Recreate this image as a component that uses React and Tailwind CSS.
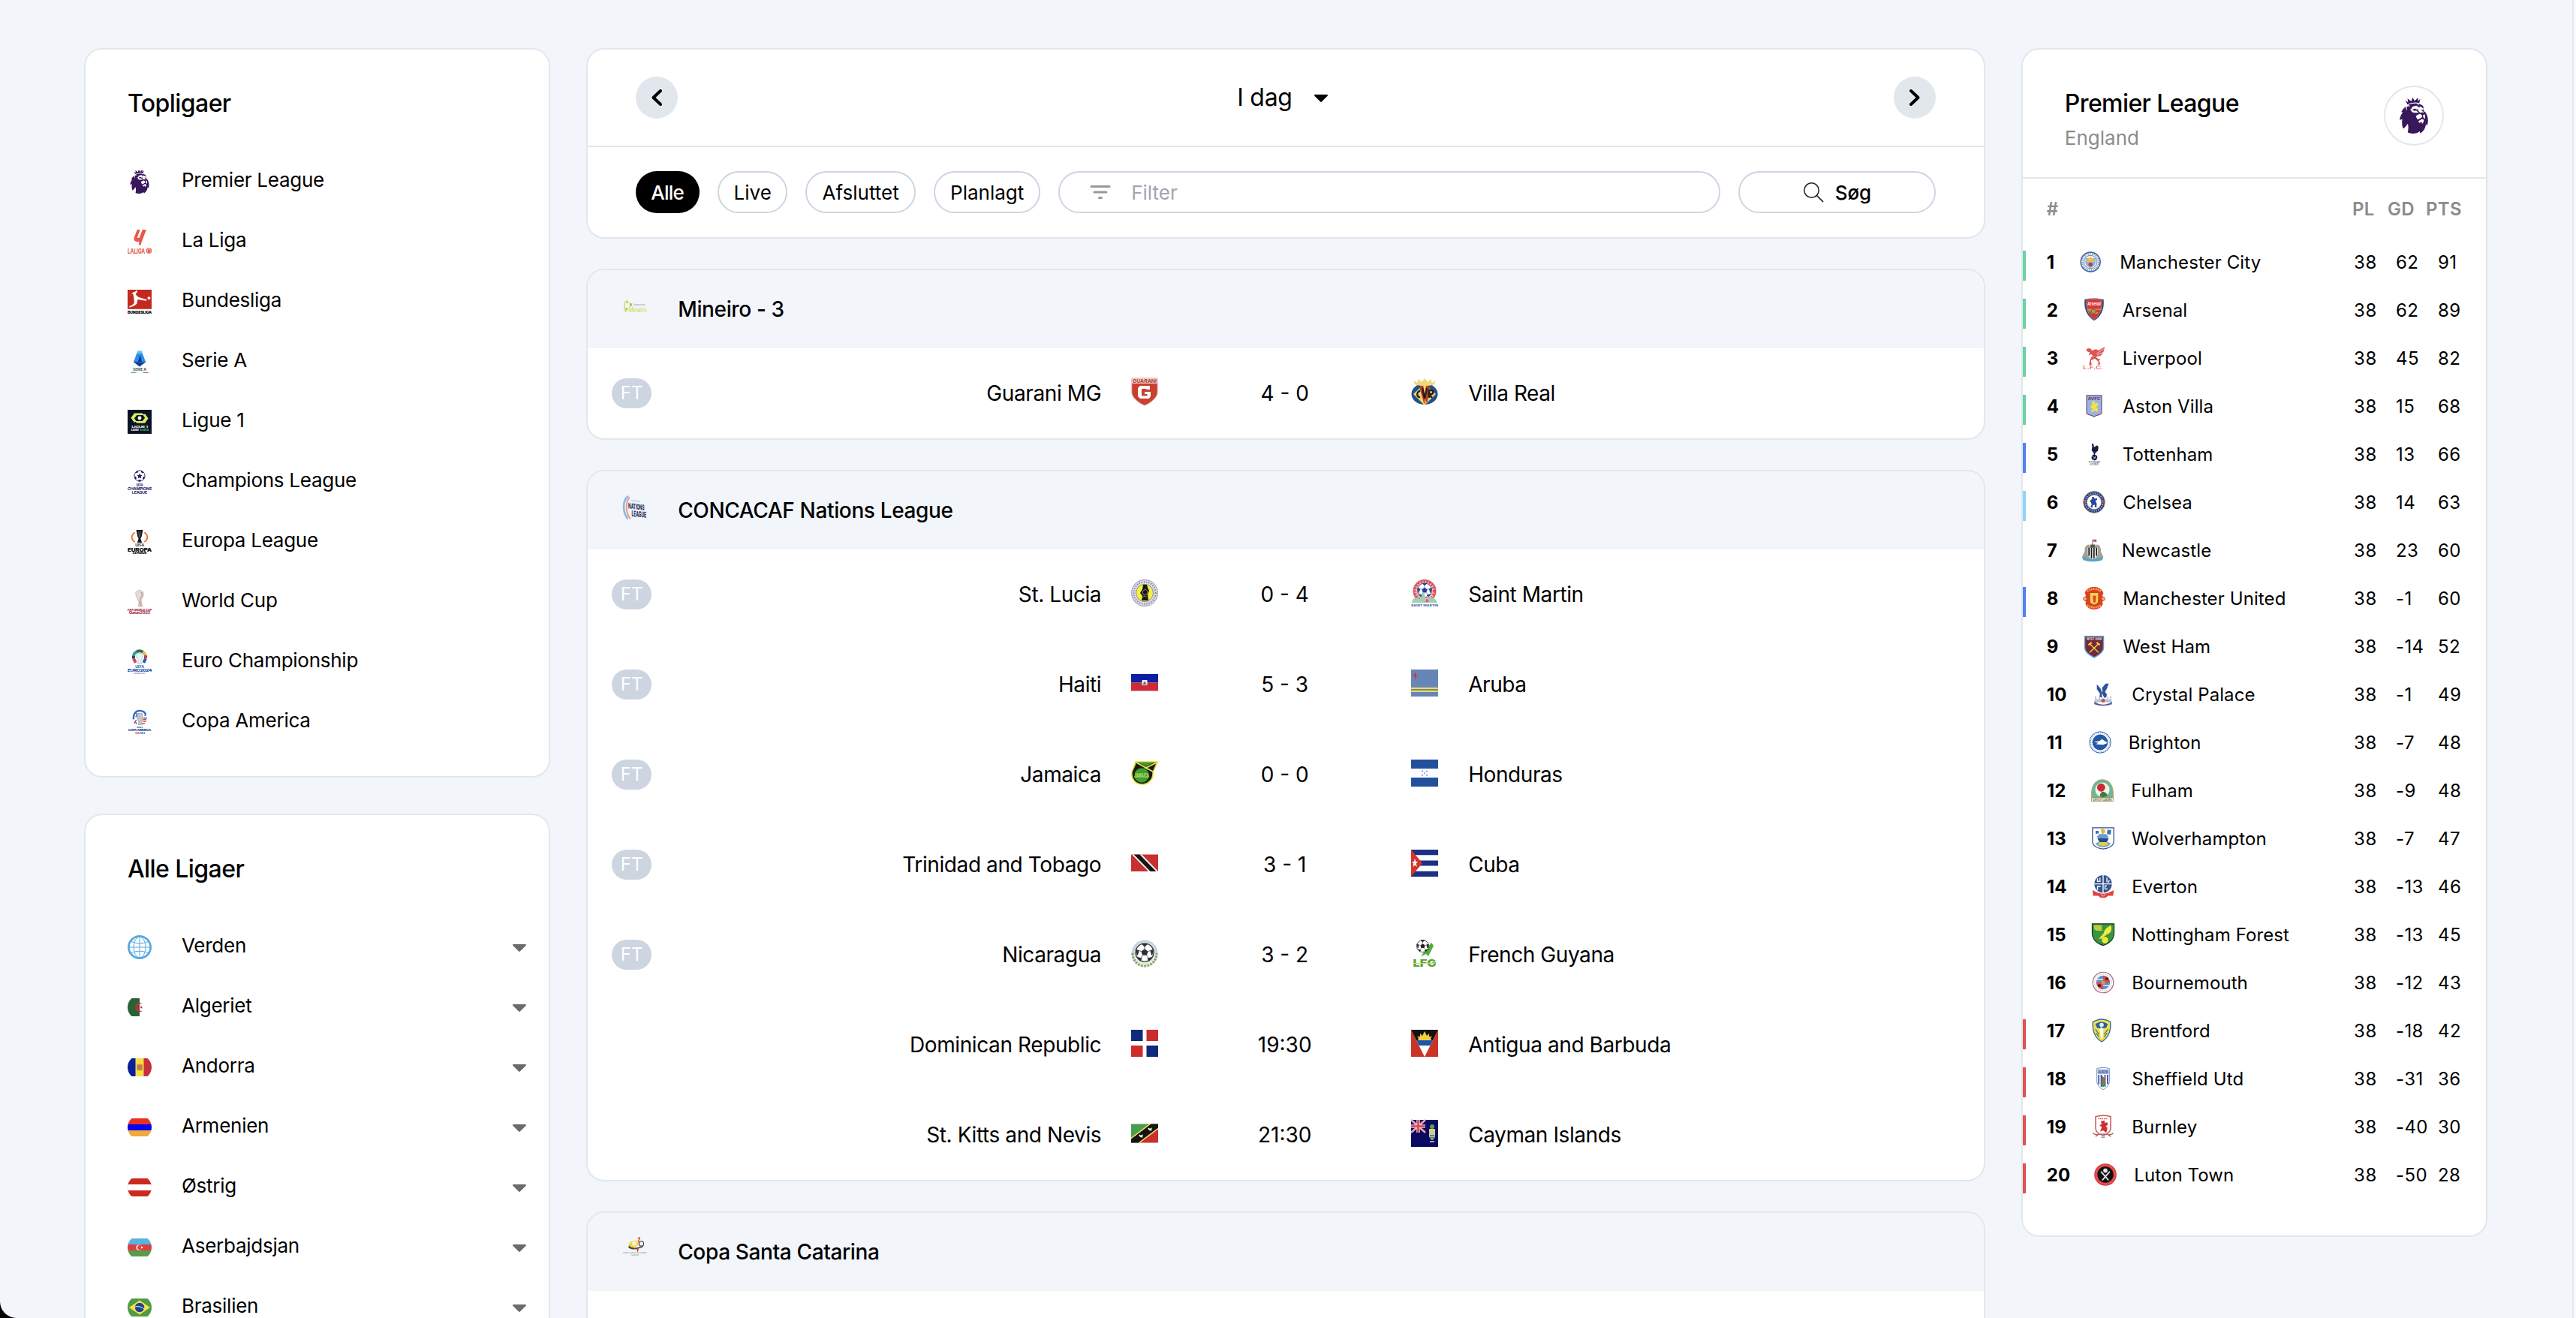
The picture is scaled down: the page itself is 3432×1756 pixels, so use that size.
import React from "react";
import { SiPremierleague } from "react-icons/si";

/* ---------- shared drawing helpers ---------- */

function Box({ size, children }) {
  return (
    <svg viewBox="0 0 36 36" width={size} height={size} className="block shrink-0 overflow-visible" preserveAspectRatio="none">
      {children}
    </svg>
  );
}

function Label({ x = 18, y, size, fill, children, weight = 700, width }) {
  return (
    <text x={x} y={y} fontSize={size} fontWeight={weight} fill={fill} textAnchor="middle" fontFamily="Inter, sans-serif" textLength={width} lengthAdjust="spacingAndGlyphs">
      {children}
    </text>
  );
}

function Ball({ cx, cy, r, dark = "#111", light = "#fff" }) {
  return (
    <g transform={`translate(${cx} ${cy}) scale(${r / 10})`}>
      <circle r="10" fill={light} stroke={dark} strokeWidth="1" />
      <path d="M0-4 3.8-1.2 2.4 3.2-2.4 3.2-3.8-1.2Z" fill={dark} />
      <path d="M-3-9.6H3L0-7ZM9.6-3 8 3 6.8-2ZM-9.6-3-8 3-6.8-2ZM3.5 7 8 5.5 5 9ZM-3.5 7-8 5.5-5 9Z" fill={dark} stroke={dark} />
      <path d="M0-4V-8M3.8-1.2 7.6-2.4M2.4 3.2 4.6 7M-2.4 3.2-4.6 7M-3.8-1.2-7.6-2.4" stroke={dark} strokeWidth="0.6" />
    </g>
  );
}

const lionPurple = "#38175a";

/* ---------- top league logos ---------- */

const leagueLogos = {
  premier: <SiPremierleague size={32} color={lionPurple} className="block shrink-0" />,
  laliga: (
    <Box size={32}>
      <path d="M14.500 0h4.500l-4.500 12h3l4.500-12h6l-7.500 20-1 3.500-3-1 1-4.500h-3c-4 0-6-3-4.500-7Z" fill="#e9594c" />
      <path d="M19 0h3l-4.500 12h-3Z" fill="#fff" />
      <Label x={13} y={35.500} size={10.500} fill="#e9594c" width={26}>LALIGA</Label>
      <circle cx="32" cy="31.500" r="4.200" fill="#e9594c" />
      <path d="M30 34v-3.500a2 2 0 0 1 4 0v3.500" stroke="#fff" fill="none" strokeWidth="0.800" />
    </Box>
  ),
  bundesliga: (
    <Box size={32}>
      <rect width="36" height="29" fill="#c3291f" />
      <path d="M3 9c2-3 5-6 8-6l2-2c2 0 2 3 0 4l-1 2 4 4 13 4-1 1.500-13-2 -1 6c-2 3-7 5-12 6l1-2c4-1 7-4 7-6l-1-8-1-5c-2 0-4 2-5 4Z" fill="#fff" />
      <circle cx="32" cy="12.500" r="2.200" fill="#fff" />
      <Label y={36} size={5.600} fill="#111" width={36} weight={900}>BUNDESLIGA</Label>
    </Box>
  ),
  seriea: (
    <Box size={32}>
      <path d="M15 2h6l6 16-9 7-9-7Z" fill="#2c8ee8" />
      <path d="M15 2h6l1 4h-8Z" fill="#54c6f2" />
      <path d="M19 8l2 10-6 1M9 18l9 7 9-7-9 2Z" fill="#123a8c" stroke="#123a8c" strokeWidth="0.500" />
      <Label y={32} size={5} fill="#4a5568" width={20}>SERIE A</Label>
      <path d="M5 34.300h8" stroke="#3f9c5c" strokeWidth="1" />
      <path d="M23 34.300h8" stroke="#c4434c" strokeWidth="1" />
    </Box>
  ),
  ligue1: (
    <Box size={32}>
      <rect width="36" height="36" fill="#0b1227" />
      <path d="M10 5h12l3 3h-11l-4 5 3 4-3 2-5-7ZM26 20H14l-3-3h11l4-5-3-4 3-2 5 7Z" fill="#d3ef5a" />
      <circle cx="18" cy="12.500" r="2.800" fill="#fff" />
      <Label y={27} size={4.500} fill="#fff" width={24}>LIGUE 1</Label>
      <Label x={11} y={32} size={4.500} fill="#fff" width={12}>Uber</Label>
      <Label x={25} y={32} size={4.500} fill="#3aa45f" width={13}>Eats</Label>
    </Box>
  ),
  champions: (
    <Box size={32}>
      <g transform="translate(18 9)">
        <circle r="8" fill="#fff" stroke="#1c1b5e" strokeWidth="1" />
        <path d="M0-4 1.200-1.200 4-1 1.800 1 2.600 4 0 2.400-2.600 4-1.800 1-4-1-1.200-1.200ZM-6-5l3-2.500 1 1.500-2 2ZM6-5 3-7.500 2-6l2 2ZM-8 1l2.500 0 1 3-2 1ZM8 1 5.500 1l-1 3 2 1ZM-2 6h4l-.500 2.500h-3Z" fill="#1c1b5e" />
      </g>
      <Label y={24.500} size={5} fill="#1c1b5e" width={10}>UEFA</Label>
      <Label y={30.800} size={5.800} fill="#1c1b5e" width={36}>CHAMPIONS</Label>
      <Label y={36} size={5.800} fill="#1c1b5e" width={23}>LEAGUE</Label>
    </Box>
  ),
  europa: (
    <Box size={32}>
      <path d="M11 4C5 7 5 15 11 18M25 4c6 3 6 11 0 14" fill="none" stroke="#ee6d2d" strokeWidth="2" />
      <path d="M13 0h10l-2 10-1.500 3 2 6h-7l2-6L15 10Z" fill="#151515" />
      <path d="M16.500 2l1 9M19.500 2l-1 9" stroke="#aaa" strokeWidth="0.600" />
      <Label y={25} size={5} fill="#333" width={13}>UEFA</Label>
      <Label y={32.300} size={7} fill="#111" width={36} weight={900}>EUROPA</Label>
      <Label y={36} size={4.300} fill="#111" width={21} weight={900}>LEAGUE</Label>
    </Box>
  ),
  worldcup: (
    <Box size={32}>
      <path d="M12 5c0-6 12-6 12 1 0 5-4 8-4 12l2 7h-6l1-6c-1-4-5-9-5-14Z" fill="#e3ddd8" stroke="#b9aca4" strokeWidth="0.700" />
      <path d="M20 3c3 2 2 7-1 10l-1 9" fill="none" stroke="#a59a92" strokeWidth="1.300" />
      <path d="M17 17l4 0 1 7h-4Z" fill="#e0a9b4" />
      <Label y={31.500} size={4.600} fill="#a53148" width={36} weight={800}>FIFA WORLD CUP</Label>
      <Label y={35.800} size={5} fill="#a53148" width={32} weight={800}>Qatar2022</Label>
    </Box>
  ),
  euro: (
    <Box size={32}>
      <g fill="none" strokeWidth="4.500">
        <path d="M13 3c3-2 7-2 10 0" stroke="#3a6b49" />
        <path d="M23 3c2 1 3 3 4 5" stroke="#e4bc3b" />
        <path d="M27 8v5" stroke="#c43b42" />
        <path d="M27 13l-3 6" stroke="#2d5ca8" />
        <path d="M13 3c-2 1-4 3-4 6" stroke="#2fa3a0" />
        <path d="M9 9v4" stroke="#27467f" />
        <path d="M9 13l3 6" stroke="#d24a3c" />
      </g>
      <path d="M14 5h8l1 6-3 5 1 5h-6l1-5-3-5Z" fill="#e7f1f3" stroke="#98c7cf" strokeWidth="0.800" />
      <Label y={26.500} size={5} fill="#3b68b0" width={13}>UEFA</Label>
      <Label y={32.500} size={5.600} fill="#23529f" width={36} weight={800}>EURO2024</Label>
      <Label y={36} size={3} fill="#7d9ccb" width={18}>GERMANY</Label>
    </Box>
  ),
  copa: (
    <Box size={32}>
      <path d="M9 14C8 5 13 1 18 1c5 0 9 3 9 6" fill="none" stroke="#2d66c3" strokeWidth="2.600" />
      <path d="M12 5l3 2-3 3M10 20l3-5M25 8h3M24 12h5" stroke="#2d66c3" strokeWidth="1.600" fill="none" />
      <path d="M23 14h5M23 17h5M11 17l3 4M22 20h4" stroke="#d5404a" strokeWidth="1.700" />
      <path d="M15 5h7l1 7-2 6 1 4h-6l1-4-3-6Z" fill="#c4c6ca" stroke="#8f9297" strokeWidth="0.700" />
      <Label y={27} size={3} fill="#2b4a9a" width={9}>2024</Label>
      <Label y={32} size={4.300} fill="#1f3b8d" width={34} weight={800}>COPA AMERICA</Label>
      <Label x={14.500} y={36} size={3.400} fill="#d5404a" width={6}>USA</Label>
      <Label x={22} y={36} size={3.400} fill="#2d66c3" width={8}>2024</Label>
    </Box>
  ),
};

/* ---------- country flags, clipped by a circle ---------- */

function RoundFlag({ id, children }) {
  return (
    <svg viewBox="0 0 32 32" width="32" height="32" className="block shrink-0">
      <clipPath id={`flag-${id}`}>
        <circle cx="16" cy="16" r="16" />
      </clipPath>
      <g clipPath={`url(#flag-${id})`}>
        <g transform="translate(0 4)">{children}</g>
      </g>
    </svg>
  );
}

const countryFlags = {
  world: (
    <svg viewBox="0 0 32 32" width="32" height="32" className="block shrink-0" fill="none" stroke="#57a9de">
      <circle cx="16" cy="16" r="14.600" strokeWidth="2.800" />
      <path d="M16 2v28M2 16h28M5 8.500c6 3 16 3 22 0M5 23.500c6-3 16-3 22 0" strokeWidth="1" />
      <ellipse cx="16" cy="16" rx="8" ry="14" strokeWidth="1" />
    </svg>
  ),
  dz: (
    <RoundFlag id="dz">
      <rect width="16" height="24" fill="#2a6238" />
      <rect x="16" width="16" height="24" fill="#fff" />
      <path d="M20 7.500a6 6 0 1 0 0 9 4.800 4.800 0 1 1 0-9Z" fill="#c32b41" />
      <path d="M20.500 12l-4-1.300 2.500 3.300v-4l-2.500 3.300Z" fill="#c32b41" />
    </RoundFlag>
  ),
  ad: (
    <RoundFlag id="ad">
      <rect width="11" height="24" fill="#0a1f9c" />
      <rect x="10.500" width="11.500" height="24" fill="#f7dc45" />
      <rect x="21.500" width="11" height="24" fill="#c6313e" />
      <rect x="12" y="7.500" width="8" height="9" rx="2" fill="#c9a04a" />
      <path d="M14 9v6M16 9v6M18 9v6" stroke="#b5543b" strokeWidth="0.900" />
    </RoundFlag>
  ),
  am: (
    <RoundFlag id="am">
      <rect width="32" height="8" fill="#e8311f" />
      <rect y="8" width="32" height="8" fill="#0503f0" />
      <rect y="16" width="32" height="8" fill="#f0a93c" />
    </RoundFlag>
  ),
  at: (
    <RoundFlag id="at">
      <rect width="32" height="24" fill="#cc2a1f" />
      <rect y="8" width="32" height="8" fill="#fff" />
    </RoundFlag>
  ),
  az: (
    <RoundFlag id="az">
      <rect width="32" height="8" fill="#55b5df" />
      <rect y="8" width="32" height="8" fill="#dc3f42" />
      <rect y="16" width="32" height="8" fill="#5a9c48" />
      <circle cx="15" cy="12" r="3.600" fill="#fff" />
      <circle cx="16" cy="12" r="2.900" fill="#dc3f42" />
      <circle cx="19" cy="12" r="1.300" fill="#fff" />
    </RoundFlag>
  ),
  br: (
    <RoundFlag id="br">
      <rect width="32" height="24" fill="#4f9c45" />
      <path d="M16 2.500 30 12 16 21.500 2 12Z" fill="#f8df49" />
      <circle cx="16" cy="12" r="6.200" fill="#20418f" />
      <path d="M10 11c4-1 9 0 12 3" stroke="#fff" strokeWidth="1" fill="none" />
    </RoundFlag>
  ),
};

/* ---------- badges used in the match list ---------- */

const matchBadges = {
  mineiro: (
    <Box size={32}>
      <path d="M6 9c-5 4-5 13-1 18" fill="none" stroke="#b9d84c" strokeWidth="1.300" />
      <path d="M6 10l2.500 1.500-1 2.500-2.500-1ZM10 13l3.500 1v3.500l-3.500 1ZM4 20l3.500 1-1 3.500-2.500-1Z" fill="#a5cf3a" />
      <Label x={24} y={17} size={3.600} fill="#9aa0a5" width={19} weight={500}>Campeonato</Label>
      <Label x={22} y={27} size={9.500} fill="#c6db4f" width={27} weight={400}>Mineiro</Label>
    </Box>
  ),
  nations: (
    <Box size={32}>
      <path d="M8 1C-1 8-1 24 7 35" fill="none" stroke="#8fb8e0" strokeWidth="3" />
      <path d="M10 3C4 10 3 25 11 35" fill="none" stroke="#ea9c9c" strokeWidth="2.400" />
      <g transform="skewY(6)">
        <Label x={19} y={8} size={4} fill="#b9c6dc" width={14}>CONCACAF</Label>
        <Label x={20} y={19} size={11.500} fill="#2a2f5c" width={24} weight={800}>NATIONS</Label>
        <Label x={24} y={30} size={12} fill="#2a2f5c" width={22} weight={800}>LEAGUE</Label>
      </g>
    </Box>
  ),
  catarina: (
    <Box size={32}>
      <ellipse cx="16" cy="10.500" rx="8" ry="5" fill="#f5d640" transform="rotate(-20 16 10)" />
      <path d="M9 13c4 5 14 4 22-1l-1 3c-7 4-17 5-22 1Z" fill="#4d4842" />
      <circle cx="27.500" cy="10" r="3.500" fill="#f4f4f4" stroke="#333" strokeWidth="1.200" />
      <circle cx="17" cy="9.500" r="3.500" fill="#f7f0d0" />
      <path d="M22 2l3-1-2 6M21 17l1 4 1-3" stroke="#cf3a3a" strokeWidth="1.400" fill="none" />
      <Label y={25} size={3} fill="#8c8c8c" width={36} weight={500}>COPA SANTA CATARINA</Label>
      <Label y={28.500} size={3} fill="#8c8c8c" width={11} weight={500}>SUB 20</Label>
    </Box>
  ),
  guarani: (
    <Box size={36}>
      <path d="M1 0h34v19c0 6-9 14-17 17C10 33 1 25 1 19Z" fill="#c8402f" stroke="#d98d84" strokeWidth="1" />
      <rect x="1" y="0" width="34" height="7" fill="#f0cfca" />
      <Label y={6} size={6.500} fill="#b13a2d" width={32}>GUARANI</Label>
      <path d="M25 15v-5H12l-3 3v11l3 3h12l2-3v-6h-8v3h3.500v2.500H14V14h6.500v1Z" fill="#fff" />
    </Box>
  ),
  villareal: (
    <Box size={36}>
      <ellipse cx="18" cy="21" rx="17.500" ry="14" fill="#245088" />
      <path d="M18 7 33 21 18 36 3 21Z" fill="#f0d76b" />
      <path d="M11 12l5-4 4 26-3-1ZM25 12l-5-4-2 26 4-3Z" fill="#c4392e" />
      <path d="M5 8 3 3l5 3 2-5 4 4 4-5 4 5 4-4 2 5 5-3-2 5c-8 3-18 3-26 0Z" fill="#efd877" />
      <path d="M12 17c-5 0-5 9 0 8M15 13l3 14 3-14M24 26V16h3c3 0 3 5 0 5h-3l4 5" fill="none" stroke="#231f20" strokeWidth="2.400" />
    </Box>
  ),
  stlucia: (
    <Box size={36}>
      <circle cx="18" cy="18" r="17.400" fill="#dcdce8" stroke="#a7a7bd" strokeWidth="1.200" />
      <circle cx="18" cy="18" r="14.600" fill="none" stroke="#7a7a9f" strokeWidth="2.200" strokeDasharray="1.200 2" />
      <circle cx="18" cy="18" r="11.500" fill="#f3ee4c" stroke="#77774d" strokeWidth="0.800" />
      <path d="M16 7h5l1 4 2 4-2 5 1 8h-9l1-6-3-4 3-5Z" fill="#161616" />
      <path d="M16 15l3-2 3 3-1 4-4 1-2-3ZM15 24l3-2 3 2" fill="none" stroke="#a9a950" strokeWidth="0.800" />
    </Box>
  ),
  stmartin: (
    <Box size={36}>
      <circle cx="18" cy="15.500" r="14.500" fill="#f0b9bb" stroke="#dc5a5e" strokeWidth="2" />
      <circle cx="18" cy="15.500" r="12.500" fill="none" stroke="#d8464c" strokeWidth="2.600" strokeDasharray="2 1.800" />
      <Ball cx={18} cy={14.500} r={9.500} dark="#2a3d92" />
      <path d="M1 31c0-5 5-8 8-6l4 1 2-9 3 1 1 12h4l2-7c4 0 9 4 10 8Z" fill="#9fd0b4" />
      <Label y={36} size={4} fill="#3b5aa0" width={36}>SAINT MARTIN</Label>
    </Box>
  ),
  haiti: (
    <Box size={36}>
      <rect y="6" width="36" height="11.500" fill="#0c1fa4" />
      <rect y="17.500" width="36" height="11" fill="#cb2b38" />
      <rect x="14.500" y="14" width="7" height="7" fill="#e9e9e9" />
      <path d="M15.500 20h5l-2.500-4.500Z" fill="#5c6b52" />
    </Box>
  ),
  aruba: (
    <Box size={36}>
      <rect width="36" height="36" fill="#6786b7" />
      <rect y="24" width="36" height="2" fill="#efe04b" />
      <rect y="28" width="36" height="2" fill="#efe04b" />
      <path d="M5.500 3l1 4 3 1-3 1-1 5-1-5-3-1 3-1Z" fill="#d2313c" />
    </Box>
  ),
  jamaica: (
    <Box size={36}>
      <path d="M6 3h29l-6 14c1 9-6 16-14 16C5 33 0 25 1 17 2 12 5 10 6 3Z" fill="#161b12" stroke="#e6df36" strokeWidth="1.600" />
      <path d="M9 4h22L20 9ZM12 13l8-4 5 5" fill="#3d9a36" />
      <path d="M7 4 29 16M34 4 16 13" stroke="#e9e34a" strokeWidth="1.800" />
      <circle cx="14" cy="21" r="10" fill="#3f9e39" stroke="#183d16" strokeWidth="1" />
      <Label x={14} y={24} size={7} fill="#c5df4a" width={20}>JAMAICA</Label>
    </Box>
  ),
  honduras: (
    <Box size={36}>
      <rect width="36" height="36" fill="#22509c" />
      <rect y="12" width="36" height="12" fill="#fbfcfe" />
      <g fill="#7ea2d6">
        <circle cx="15" cy="15.500" r="1.100" />
        <circle cx="21" cy="15.500" r="1.100" />
        <circle cx="18" cy="18" r="1.100" />
        <circle cx="15" cy="20.800" r="1.100" />
        <circle cx="21" cy="20.800" r="1.100" />
      </g>
    </Box>
  ),
  trinidad: (
    <Box size={36}>
      <rect y="6.500" width="36" height="22.500" fill="#c8302f" />
      <path d="M1 6.500h13L36 29H23Z" fill="#fff" />
      <path d="M3.500 6.500h8L33.500 29h-8Z" fill="#161616" />
    </Box>
  ),
  cuba: (
    <Box size={36}>
      <rect width="36" height="36" fill="#fff" />
      <path d="M0 3.600h36M0 18h36M0 32.400h36" stroke="#1b3283" strokeWidth="7.200" />
      <path d="M0 0 15 18 0 36Z" fill="#d3342b" />
      <path d="M5 12l1.200 4H9l-2.300 2.500 1 4.500L5 20.500 2.300 23l1-4.500L1 16h2.800Z" fill="#fff" />
    </Box>
  ),
  nicaragua: (
    <Box size={36}>
      <circle cx="18" cy="18" r="17.500" fill="#bcd6e8" />
      <path d="M2 18c0 10 7 17 16 17s16-7 16-17" fill="#e9edd8" stroke="#86a36c" strokeWidth="3.200" strokeDasharray="2.600 1.600" />
      <circle cx="18" cy="16.500" r="14" fill="#ddd8c4" />
      <Ball cx={18} cy={17} r={12} dark="#2a2e38" />
    </Box>
  ),
  guyana: (
    <Box size={36}>
      <path d="M19 14l8-10 3 4-7 14-3-3-7 3Z" fill="#4cae36" />
      <Ball cx={15.500} cy={8.500} r={8} dark="#222" />
      <Label y={36} size={13} fill="#5aa544" width={31} weight={900}>LFG</Label>
      <path d="M4 31.500h28" stroke="#d8e04c" strokeWidth="1" />
    </Box>
  ),
  dominican: (
    <Box size={36}>
      <rect width="36" height="36" fill="#fff" />
      <rect width="15.500" height="15" fill="#10297c" />
      <rect x="20.500" width="15.500" height="15" fill="#cc2d2b" />
      <rect y="21" width="15.500" height="15" fill="#cc2d2b" />
      <rect x="20.500" y="21" width="15.500" height="15" fill="#10297c" />
    </Box>
  ),
  antigua: (
    <Box size={36}>
      <rect width="36" height="36" fill="#cb3327" />
      <path d="M0 0h36L18 36Z" fill="#fff" />
      <path d="M0 0h36L29 14H7Z" fill="#121212" />
      <path d="M7 14h22l-3.500 7h-15Z" fill="#1f55a8" />
      <path d="M9 14l1-3-2-2 4 0 0-4 3 3 3-6 3 6 3-3 0 4 4 0-2 2 1 3Z" fill="#f3cf3e" />
    </Box>
  ),
  stkitts: (
    <Box size={36}>
      <path d="M0 5.500h36L0 30.500Z" fill="#4a9c50" />
      <path d="M36 5.500v25H0Z" fill="#c9302f" />
      <path d="M24 5.500h12v7L12 30.500H0v-7Z" fill="#efe04b" />
      <path d="M26.500 5.500H36v5L9.500 30.500H0v-5Z" fill="#141414" />
      <path d="M11 20l1.500 2 2-1-.500 2.500M23 11l1.500 2 2-1-.500 2.500" stroke="#fff" strokeWidth="1.800" fill="none" />
    </Box>
  ),
  cayman: (
    <Box size={36}>
      <rect width="36" height="36" fill="#0a0a62" />
      <path d="M0 0 19 17M19 0 0 17" stroke="#e9a9b0" strokeWidth="2.600" />
      <path d="M9.500 0v17M0 8.500h19" stroke="#f3c9cd" strokeWidth="4.600" />
      <path d="M9.500 0v17M0 8.500h19" stroke="#d4474f" strokeWidth="2.600" />
      <path d="M24 12h8v9c0 3-2 5-4 6-2-1-4-3-4-6Z" fill="#d8c98a" />
      <path d="M25 21h6M25 24h6" stroke="#3e86b8" strokeWidth="1.800" />
      <circle cx="28" cy="9" r="3" fill="#57a05a" />
      <path d="M25 29h6" stroke="#e6cf6a" strokeWidth="1.600" />
    </Box>
  ),
};

/* ---------- club badges in the standings ---------- */

const clubBadges = {
  city: (
    <Box size={30}>
      <circle cx="17" cy="18" r="15.500" fill="#fff" stroke="#44699a" strokeWidth="2" />
      <circle cx="17" cy="18" r="13" fill="none" stroke="#7f98bd" strokeWidth="2.600" strokeDasharray="1.600 1.400" />
      <circle cx="17" cy="18" r="10.500" fill="#eef3f8" stroke="#44699a" strokeWidth="1" />
      <path d="M9 12h16v7c0 4-4 7-8 9-4-2-8-5-8-9Z" fill="#86b4df" />
      <path d="M11 18v-4l3-2 3-2 3 2 3 2v4Z" fill="#edc04b" />
      <circle cx="17" cy="22" r="3.200" fill="#c03a4a" />
    </Box>
  ),
  arsenal: (
    <Box size={30}>
      <path d="M3 1c10-2 20-2 30 0 2 15-4 28-15 34C7 29 1 16 3 1Z" fill="#2d4a7e" />
      <path d="M6 2c8-2 16-2 24 0 1 14-3 25-12 31C9 27 5 16 6 2Z" fill="#d9343b" stroke="#c9a35c" strokeWidth="0.800" />
      <Label y={11} size={7} fill="#fff" width={21}>Arsenal</Label>
      <path d="M7 16h20l3-1v3h-8l-2 3h4v3H13v-3l-6-2Z" fill="#b89554" />
      <circle cx="17" cy="20" r="3.500" fill="none" stroke="#8a6f42" strokeWidth="1.500" />
    </Box>
  ),
  liverpool: (
    <Box size={30}>
      <path d="M5 5c3-4 9-3 9 1l7-2 4 2 10-6-2 8-4 6-8 2c2 3 4 4 7 3l-2 3 2 6-4 1 1-5-6-5-6 3 1 7-4 0 1-6 2-6 3-3-4-2-3 2 2-5-3-1Z" fill="#dd5653" />
      <path d="M22 11 34 3M23 13l10-4M13 12l4 4" stroke="#fff" strokeWidth="0.800" />
      <Label x={16.500} y={36} size={7.500} fill="#dd5653" width={33} weight={500}>L.F.C.</Label>
    </Box>
  ),
  villa: (
    <Box size={30}>
      <path d="M6 1h24v28c0 3-8 3-12 6-4-3-12-3-12-6Z" fill="#98b5e0" stroke="#7d4a74" strokeWidth="1.400" />
      <Label y={8} size={6.500} fill="#6d2f5d" width={20}>AVFC</Label>
      <path d="M14 11l6-1-1 4 5-1 1 4-4 2 3 3-1 6-4-3-4 3-2-2 3-4-3 0-1-4 3-2Z" fill="#f0e04e" />
    </Box>
  ),
  tottenham: (
    <Box size={30}>
      <path d="M14 1l3 1 1 5 5-3 2 3-1 6-4 3-1 4h-1l-1-4-3-4 1-6Z" fill="#171b41" />
      <circle cx="18.500" cy="23.500" r="4.600" fill="#171b41" />
      <path d="M15 22l7 3M17 27l4-7" stroke="#fff" strokeWidth="0.700" />
      <Label y={32} size={4.400} fill="#6e7190" width={18}>TOTTENHAM</Label>
      <Label y={36} size={4.400} fill="#6e7190" width={13}>HOTSPUR</Label>
    </Box>
  ),
  chelsea: (
    <Box size={30}>
      <circle cx="18" cy="18" r="17.300" fill="#253c8c" stroke="#b59f5c" strokeWidth="1.200" />
      <circle cx="18" cy="18" r="14" fill="none" stroke="#a6b1d6" strokeWidth="2.600" strokeDasharray="1.500 2" />
      <circle cx="18" cy="18" r="11.500" fill="#fff" stroke="#b59f5c" strokeWidth="0.800" />
      <path d="M14 10l4 0 1 3 3-2 1 3-3 2 2 4 0 6-3 0 0-4-3 1-1 4-3-1 2-4-1-4-2-1 2-3 2-1Z" fill="#2b46a0" />
      <circle cx="3.500" cy="18" r="2" fill="#c8434e" />
      <circle cx="32.500" cy="18" r="2" fill="#c8434e" />
    </Box>
  ),
  newcastle: (
    <Box size={30}>
      <path d="M1 32c-2-8 4-8 3-14 0-5 3-9 7-9l2 4h8l2-4c4 0 7 4 7 9-1 6 5 6 3 14Z" fill="#a3a095" />
      <path d="M9 14h16v9c0 5-4 8-8 9-4-1-8-4-8-9Z" fill="#f2f2f0" />
      <path d="M11 14v13M15 14v17M19 14v17M23 14v13" stroke="#151515" strokeWidth="2" />
      <path d="M13 9h8v5h-8ZM16 2h1v7h-1Z" fill="#5f564b" />
      <path d="M17 1h6v4l-6-1Z" fill="#cc5563" />
      <path d="M0 28c10 6 24 6 34 0l-2 6c-9 3-21 3-30 0Z" fill="#4fa5c9" />
    </Box>
  ),
  united: (
    <Box size={30}>
      <path d="M3 10C5 3 11 0 18 0s13 3 15 10l-2 4 4 5-4 5 1 3c-2 6-8 9-14 9S6 33 4 27l1-3-4-5 4-5Z" fill="#dc4029" />
      <path d="M7 7c6-5 16-5 22 0M7 29c6 5 16 5 22 0" fill="none" stroke="#f3c24c" strokeWidth="3" strokeDasharray="2 1.500" />
      <path d="M11 9h14v13c0 4-4 6-7 7-3-1-7-3-7-7Z" fill="#f5d14f" stroke="#b93622" strokeWidth="1" />
      <path d="M16 14h5l-1 11h-3Z" fill="#d6402c" />
      <circle cx="3.500" cy="19" r="2.800" fill="#f1c552" stroke="#b93622" />
      <circle cx="32.500" cy="19" r="2.800" fill="#f1c552" stroke="#b93622" />
    </Box>
  ),
  westham: (
    <Box size={30}>
      <path d="M3 2h30v18c0 7-7 12-15 16C10 32 3 27 3 20Z" fill="#73293a" stroke="#5aa6d4" strokeWidth="1.800" />
      <Label y={8} size={5.500} fill="#e7d8dc" width={24}>WEST HAM</Label>
      <path d="M11 14l14 14M25 14 11 28" stroke="#f1cd3d" strokeWidth="1.800" />
      <path d="M8 15l5-4 2 2-5 4ZM28 15l-5-4-2 2 5 4Z" fill="#f1cd3d" />
    </Box>
  ),
  palace: (
    <Box size={30}>
      <path d="M8 2l6 7 2 6 1-2-1-5 6-7 5 0-3 8-3 5 3 4-1 5-6 1-5-2 1-5-5-7Z" fill="#2f559f" />
      <path d="M16 16l4 8-4 2Z" fill="#f3f4f8" />
      <path d="M5 27v-6h2v5h4v-4h2v4h11v-4h2v4h3v-5h2v6l2 4H3Z" fill="#b9c3d8" />
      <circle cx="18" cy="28" r="3" fill="#d24b4e" />
      <path d="M4 30c9 6 19 6 28 0v4c-8 3-20 3-28 0Z" fill="#5e5296" />
    </Box>
  ),
  brighton: (
    <Box size={30}>
      <circle cx="18" cy="18" r="17" fill="#fff" stroke="#2c62ac" strokeWidth="1.200" />
      <circle cx="18" cy="18" r="15" fill="none" stroke="#87a5d2" strokeWidth="1.700" strokeDasharray="1.500 2" />
      <circle cx="18" cy="18" r="12.500" fill="#2258a8" />
      <path d="M8 17l9-1 4-3 9 6-7 3-12-1 4-2Z" fill="#fff" />
    </Box>
  ),
  blackburn: (
    <Box size={30}>
      <path d="M1 30C-1 10 7 1 18 1s19 9 17 29Z" fill="#6ab79a" stroke="#b8a75a" strokeWidth="1.200" />
      <circle cx="18" cy="17" r="11.500" fill="#f5f3e6" />
      <path d="M18 20c4 0 8 3 8 7l-7 2-5-1c0-4 1-6 4-8Z" fill="#3c7a3e" />
      <circle cx="16" cy="13.500" r="6.500" fill="#c92a33" />
      <rect x="0.500" y="30" width="35" height="5.500" fill="#f8f6ea" stroke="#8c7b45" strokeWidth="0.800" />
      <Label y={34.500} size={4} fill="#6d6340" width={30}>ARTE ET LABORE</Label>
    </Box>
  ),
  huddersfield: (
    <Box size={30}>
      <path d="M1 1h34v22c0 7-8 11-17 12C9 34 1 30 1 23Z" fill="#fff" stroke="#34508c" strokeWidth="1.500" />
      <path d="M6 6l5 0 0 4-5 1ZM25 4l6 1-1 7-6-1Z" fill="#3977ba" />
      <path d="M14 4c4-3 9 0 7 5l-5 3Z" fill="#d9b94a" />
      <path d="M12 11h11l4 5-3 2H10l-2-3Z" fill="#6c9ccd" />
      <path d="M9 18h18l-3 6H12Z" fill="#1f4c8f" />
      <path d="M6 26c4 8 20 8 24 0l-4-2H10Z" fill="#7aa5cf" />
      <path d="M10 27c4 4 12 4 16 0l-2-3H12Z" fill="#efcb42" />
    </Box>
  ),
  bolton: (
    <Box size={30}>
      <circle cx="18" cy="14" r="14" fill="#37548f" />
      <path d="M18 0v28M4 14h28M9 5v5h4V4M9 24v-6h5M24 4l0 7M28 8l-2 4M24 17h-3v5h4" stroke="#fff" strokeWidth="1.600" fill="none" />
      <path d="M1 24l8 4c6 2 12 2 18 0l8-4-1 9-8 0-4 3h-8l-4-3-8 0Z" fill="#dd4440" />
      <circle cx="18" cy="31" r="2.500" fill="none" stroke="#fff" strokeWidth="0.700" />
    </Box>
  ),
  norwich: (
    <Box size={30}>
      <path d="M0.500 1h35v15c0 10-8 17-17.500 19.500C8.500 33 .500 26 .500 16Z" fill="#3a9440" stroke="#17351c" strokeWidth="1.400" />
      <path d="M3 3h13v9H7l-3-2Z" fill="#b9cf42" />
      <path d="M30 3c3 6 1 13-6 15l-9 7-4 0 8-9c1-7 6-9 11-13Z" fill="#f4e83e" />
      <circle cx="21" cy="27" r="5" fill="#f4e83e" />
    </Box>
  ),
  reading: (
    <Box size={30}>
      <circle cx="18" cy="18" r="16.500" fill="#fff" stroke="#a96a70" strokeWidth="1.400" />
      <circle cx="18" cy="18" r="13.500" fill="none" stroke="#c4cbdc" strokeWidth="1.600" strokeDasharray="2 1.500" />
      <path d="M18 7v11H7c0-6 5-11 11-11ZM18 29V18h11c0 6-5 11-11 11Z" fill="#5a8fcb" />
      <path d="M18 7v11h11c0-6-5-11-11-11ZM18 29V18H7c0 6 5 11 11 11Z" fill="#dc4a45" />
      <path d="M8 13h10M18 23h10" stroke="#fff" strokeWidth="1.500" />
      <circle cx="12" cy="23" r="2.500" fill="#3d2430" />
      <circle cx="24" cy="12" r="2.500" fill="#3d2430" />
      <circle cx="18" cy="18" r="3" fill="#cfa14b" />
    </Box>
  ),
  leeds: (
    <Box size={30}>
      <path d="M18 0c5 0 10 2 14 4 1 12-2 25-14 32C6 29 3 16 4 4c4-2 9-4 14-4Z" fill="#f2e04a" stroke="#2f6ba6" strokeWidth="1.600" />
      <path d="M8 8c6-5 14-5 20 0l-3 6H11Z" fill="#2560a8" />
      <circle cx="18" cy="9" r="3.400" fill="#e8eef6" />
      <path d="M18 13l3 3-2 15h-2l-2-15Z" fill="#fff" />
      <path d="M8 16l6 8M9 22l5 6M28 16l-6 8M27 22l-5 6" stroke="#2560a8" strokeWidth="1.300" />
    </Box>
  ),
  westbrom: (
    <Box size={30}>
      <path d="M8 2c5-2 15-2 20 0v20c0 6-5 11-10 14C13 33 8 28 8 22Z" fill="#fff" stroke="#5c78b5" strokeWidth="1" />
      <rect x="9" y="3" width="18" height="8" fill="#a9bada" />
      <Label y={9.500} size={5} fill="#3e5b9c" width={16}>ALBION</Label>
      <path d="M11 12v15M25 12v15M15 12v19M21 12v19" stroke="#2f4f9e" strokeWidth="2" />
      <path d="M16 13l6 6-2 9-5-4Z" fill="#9a6a58" />
      <path d="M14 26l8-2 0 5-5 3Z" fill="#4c8c57" />
    </Box>
  ),
  middlesbrough: (
    <Box size={30}>
      <path d="M6 2c7-2 17-2 24 0v18c0 6-5 10-12 12C11 30 6 26 6 20Z" fill="#fff" stroke="#c65a56" strokeWidth="1.800" />
      <path d="M10 5.500h16" stroke="#c65a56" strokeWidth="1.800" strokeDasharray="2 1" />
      <path d="M14 10l6-2 1 4 4-1 0 5-3 1 3 3-2 8-5-4-5 2 3-7-4-3 4-2Z" fill="#cf2f31" />
      <path d="M2 28c2 5 8 2 16 2s14 3 16-2M6 34l4-3M30 34l-4-3M15 35h6" stroke="#a96763" strokeWidth="1.600" fill="none" />
    </Box>
  ),
  sheffield: (
    <Box size={30}>
      <circle cx="18" cy="18" r="17.800" fill="#dd3b3e" />
      <circle cx="18" cy="18" r="15" fill="none" stroke="#ea7d7d" strokeWidth="1.800" strokeDasharray="1.500 2" />
      <circle cx="18" cy="18" r="12.800" fill="#111" />
      <path d="M11 13l12 14M25 13 13 27" stroke="#e8e8e8" strokeWidth="2.200" />
      <circle cx="18" cy="11.500" r="3.400" fill="#e8e8e8" />
    </Box>
  ),
};

/* ---------- data ---------- */

const topLeagues = [
  ["premier", "Premier League"],
  ["laliga", "La Liga"],
  ["bundesliga", "Bundesliga"],
  ["seriea", "Serie A"],
  ["ligue1", "Ligue 1"],
  ["champions", "Champions League"],
  ["europa", "Europa League"],
  ["worldcup", "World Cup"],
  ["euro", "Euro Championship"],
  ["copa", "Copa America"],
];

const countries = [
  ["world", "Verden"],
  ["dz", "Algeriet"],
  ["ad", "Andorra"],
  ["am", "Armenien"],
  ["at", "Østrig"],
  ["az", "Aserbajdsjan"],
  ["br", "Brasilien"],
];

const competitions = [
  {
    badge: "mineiro",
    name: "Mineiro - 3",
    matches: [["FT", "Guarani MG", "guarani", "4 - 0", "villareal", "Villa Real"]],
  },
  {
    badge: "nations",
    name: "CONCACAF Nations League",
    matches: [
      ["FT", "St. Lucia", "stlucia", "0 - 4", "stmartin", "Saint Martin"],
      ["FT", "Haiti", "haiti", "5 - 3", "aruba", "Aruba"],
      ["FT", "Jamaica", "jamaica", "0 - 0", "honduras", "Honduras"],
      ["FT", "Trinidad and Tobago", "trinidad", "3 - 1", "cuba", "Cuba"],
      ["FT", "Nicaragua", "nicaragua", "3 - 2", "guyana", "French Guyana"],
      [null, "Dominican Republic", "dominican", "19:30", "antigua", "Antigua and Barbuda"],
      [null, "St. Kitts and Nevis", "stkitts", "21:30", "cayman", "Cayman Islands"],
    ],
  },
  { badge: "catarina", name: "Copa Santa Catarina", matches: [] },
];

const green = "bg-[#68d3a0]";
const blue = "bg-[#4f83f1]";
const sky = "bg-[#8fd3fa]";
const red = "bg-[#e0534e]";

/* zone colour, badge, club, goal difference, points, width of the rank cell */
const standings = [
  [green, "city", "Manchester City", "62", "91", 44.5],
  [green, "arsenal", "Arsenal", "62", "89", 48],
  [green, "liverpool", "Liverpool", "45", "82", 48],
  [green, "villa", "Aston Villa", "15", "68", 48.5],
  [blue, "tottenham", "Tottenham", "13", "66", 48],
  [sky, "chelsea", "Chelsea", "14", "63", 48.5],
  [null, "newcastle", "Newcastle", "23", "60", 47],
  [blue, "united", "Manchester United", "-1", "60", 48.5],
  [null, "westham", "West Ham", "-14", "52", 48.5],
  [null, "palace", "Crystal Palace", "-1", "49", 60.5],
  [null, "brighton", "Brighton", "-7", "48", 56],
  [null, "blackburn", "Fulham", "-9", "48", 59.5],
  [null, "huddersfield", "Wolverhampton", "-7", "47", 60],
  [null, "bolton", "Everton", "-13", "46", 60.5],
  [null, "norwich", "Nottingham Forest", "-13", "45", 60],
  [null, "reading", "Bournemouth", "-12", "43", 60.5],
  [red, "leeds", "Brentford", "-18", "42", 58.5],
  [red, "westbrom", "Sheffield Utd", "-31", "36", 60.5],
  [red, "middlesbrough", "Burnley", "-40", "30", 60.5],
  [red, "sheffield", "Luton Town", "-50", "28", 63.5],
];

/* ---------- layout pieces ---------- */

function Caret({ color }) {
  return (
    <svg viewBox="0 0 36 36" width="36" height="36" className="block shrink-0">
      <path d="M10 14h16a1 1 0 0 1 .7 1.700l-7.600 7.600a1.500 1.500 0 0 1-2.200 0l-7.600-7.600A1 1 0 0 1 10 14Z" fill={color} />
    </svg>
  );
}

function SideCard({ title, children }) {
  return (
    <section className="rounded-3xl border-2 border-[#e2e7ee] bg-white pb-8 pl-14 pr-[21px]">
      <h2 className="flex h-[136px] items-center pt-2 text-[32px] font-medium tracking-[-0.57px]">{title}</h2>
      {children}
    </section>
  );
}

function SideRow({ icon, label, expandable }) {
  return (
    <div className="flex h-20 items-center gap-10 text-[26px] tracking-[-0.26px]">
      {icon}
      <span className="flex-1 pb-[5px]">{label}</span>
      {expandable && <Caret color="#6b6b6b" />}
    </div>
  );
}

function RoundButton({ flip }) {
  return (
    <button className="flex size-14 items-center justify-center rounded-full bg-[#e2e7ee]">
      <svg viewBox="0 0 56 56" width="56" height="56" fill="none" stroke="#000" strokeWidth="4" strokeLinecap="round" strokeLinejoin="round">
        <path d={flip ? "M23 19l9.500 9L23 37" : "M33 19l-9.500 9L33 37"} />
      </svg>
    </button>
  );
}

function Toolbar() {
  const pill = "flex h-14 items-center justify-center rounded-full border-2 border-[#cdd5e1] text-[26px]";
  return (
    <section className="rounded-3xl border-2 border-[#e2e7ee] bg-white">
      <div className="flex h-[130px] items-center justify-between border-b-2 border-[#e4e6ea] px-16">
        <RoundButton />
        <div className="flex items-center gap-5 text-[32px] tracking-[-0.3px]">
          <span>I dag</span>
          <Caret color="#000" />
        </div>
        <RoundButton flip />
      </div>
      <div className="flex gap-6 px-16 py-8">
        <button className="flex h-14 w-[85px] items-center justify-center rounded-full bg-black pr-px text-[26px] font-medium tracking-[-0.7px] text-white">Alle</button>
        <button className={`${pill} w-[93px]`}>Live</button>
        <button className={`${pill} w-[147px]`}>Afsluttet</button>
        <button className={`${pill} w-[142px]`}>Planlagt</button>
        <div className="flex h-14 flex-1 items-center gap-[27px] rounded-full border-2 border-[#cdd5e1] pl-10 text-[26px] text-[#a0a6b1]">
          <svg viewBox="0 0 28 20" width="28" height="20" stroke="#999" strokeWidth="3" strokeLinecap="round">
            <path d="M2 2.500h24M6 10h16M12.500 17.500h3" />
          </svg>
          <span>Filter</span>
        </div>
        <button className={`${pill} w-[263px] gap-[15px] font-medium tracking-[-0.2px]`}>
          <svg viewBox="0 0 28 28" width="28" height="28" fill="none" stroke="#222" strokeWidth="1.500" strokeLinecap="round">
            <circle cx="11.500" cy="11.500" r="9.700" />
            <path d="M18.600 18.600l8 8" />
          </svg>
          <span>Søg</span>
        </button>
      </div>
    </section>
  );
}

function Match({ match }) {
  const [status, home, homeBadge, score, awayBadge, away] = match;
  return (
    <div className="grid h-[120px] grid-cols-[728px_337px_1fr] items-center pl-8 text-[28px]">
      <div className="flex items-center">
        {status && (
          <span className="flex h-10 w-[53px] items-center justify-center rounded-full bg-[#cdd5e0] text-[24px] text-white">{status}</span>
        )}
        <span className="ml-auto mr-10 tracking-[-0.4px]">{home}</span>
        <span className="pb-1">{matchBadges[homeBadge]}</span>
      </div>
      <span className="text-center">{score}</span>
      <div className="flex items-center gap-10">
        <span className="pb-1">{matchBadges[awayBadge]}</span>
        <span className="tracking-[-0.42px]">{away}</span>
      </div>
    </div>
  );
}

function Competition({ item }) {
  return (
    <section className="overflow-hidden rounded-3xl border-2 border-[#e2e7ee] bg-white">
      <header className="flex h-[104px] items-center gap-[41px] bg-[#f2f5fa] pl-[47px]">
        <span className="pb-2">{matchBadges[item.badge]}</span>
        <h3 className="text-[28px] font-medium tracking-[-0.36px]">{item.name}</h3>
      </header>
      {item.matches.map((m) => (
        <Match key={m[1]} match={m} />
      ))}
      {item.matches.length === 0 && <div className="h-[120px]" />}
    </section>
  );
}

function Standings() {
  return (
    <section className="rounded-3xl border-2 border-[#e2e7ee] bg-white pb-12">
      <header className="flex h-[172px] items-center justify-between border-b-2 border-[#e2e7ee] px-14">
        <div className="mt-4">
          <h2 className="text-[32px] font-medium leading-[50px] tracking-[-0.6px]">Premier League</h2>
          <p className="text-[26px] leading-[42px] text-[#8c8c8c]">England</p>
        </div>
        <div className="mt-[6px] flex size-20 items-center justify-center rounded-full border-2 border-[#e2e7ee]">
          <SiPremierleague size={48} color={lionPurple} />
        </div>
      </header>
      <div className="flex h-20 items-center pl-8 pt-0.5 text-[24px] font-semibold tracking-[0.3px] text-[#8c8c8c]">
        <span className="flex-1">#</span>
        <span className="w-[47px]">PL</span>
        <span className="w-[51px]">GD</span>
        <span className="w-20">PTS</span>
      </div>
      {standings.map(([zone, badge, club, gd, pts, rankWidth], i) => (
        <div key={club} className="flex h-16 items-center text-[24px] tracking-[0.1px]">
          <div className={`mt-2 h-10 w-1 ${zone ?? ""}`} />
          <span className="pl-[28px]">
            <span className="block font-bold" style={{ width: rankWidth }}>{i + 1}</span>
          </span>
          <span className="pb-0.5">{clubBadges[badge]}</span>
          <span className="flex-1 pl-[23px]">{club}</span>
          <span className="w-14 tracking-[0.6px]">38</span>
          <span className="w-14 tracking-[0.4px]">{gd}</span>
          <span className="w-16 tracking-[0.4px]">{pts}</span>
        </div>
      ))}
    </section>
  );
}

export default function App() {
  return (
    <div className="h-[1756px] w-full bg-black font-[Inter,sans-serif] text-black">
      <div className="flex h-full overflow-hidden rounded-bl-[22px] bg-[#f2f5fa]">
        <main className="grid flex-1 grid-cols-[1fr_3fr_1fr] items-start gap-12 pl-28 pr-[113px] pt-16">
          <div className="flex min-w-0 flex-col gap-12">
            <SideCard title="Topligaer">
              {topLeagues.map(([id, label]) => (
                <SideRow key={id} icon={leagueLogos[id]} label={label} />
              ))}
            </SideCard>
            <SideCard title="Alle Ligaer">
              {countries.map(([id, label]) => (
                <SideRow key={id} icon={countryFlags[id]} label={label} expandable />
              ))}
            </SideCard>
          </div>
          <div className="flex min-w-0 flex-col gap-10">
            <Toolbar />
            {competitions.map((c) => (
              <Competition key={c.name} item={c} />
            ))}
          </div>
          <Standings />
        </main>
        <div className="w-[5px] border-l-2 border-[#e6eaf0] bg-slate-50" />
      </div>
    </div>
  );
}
